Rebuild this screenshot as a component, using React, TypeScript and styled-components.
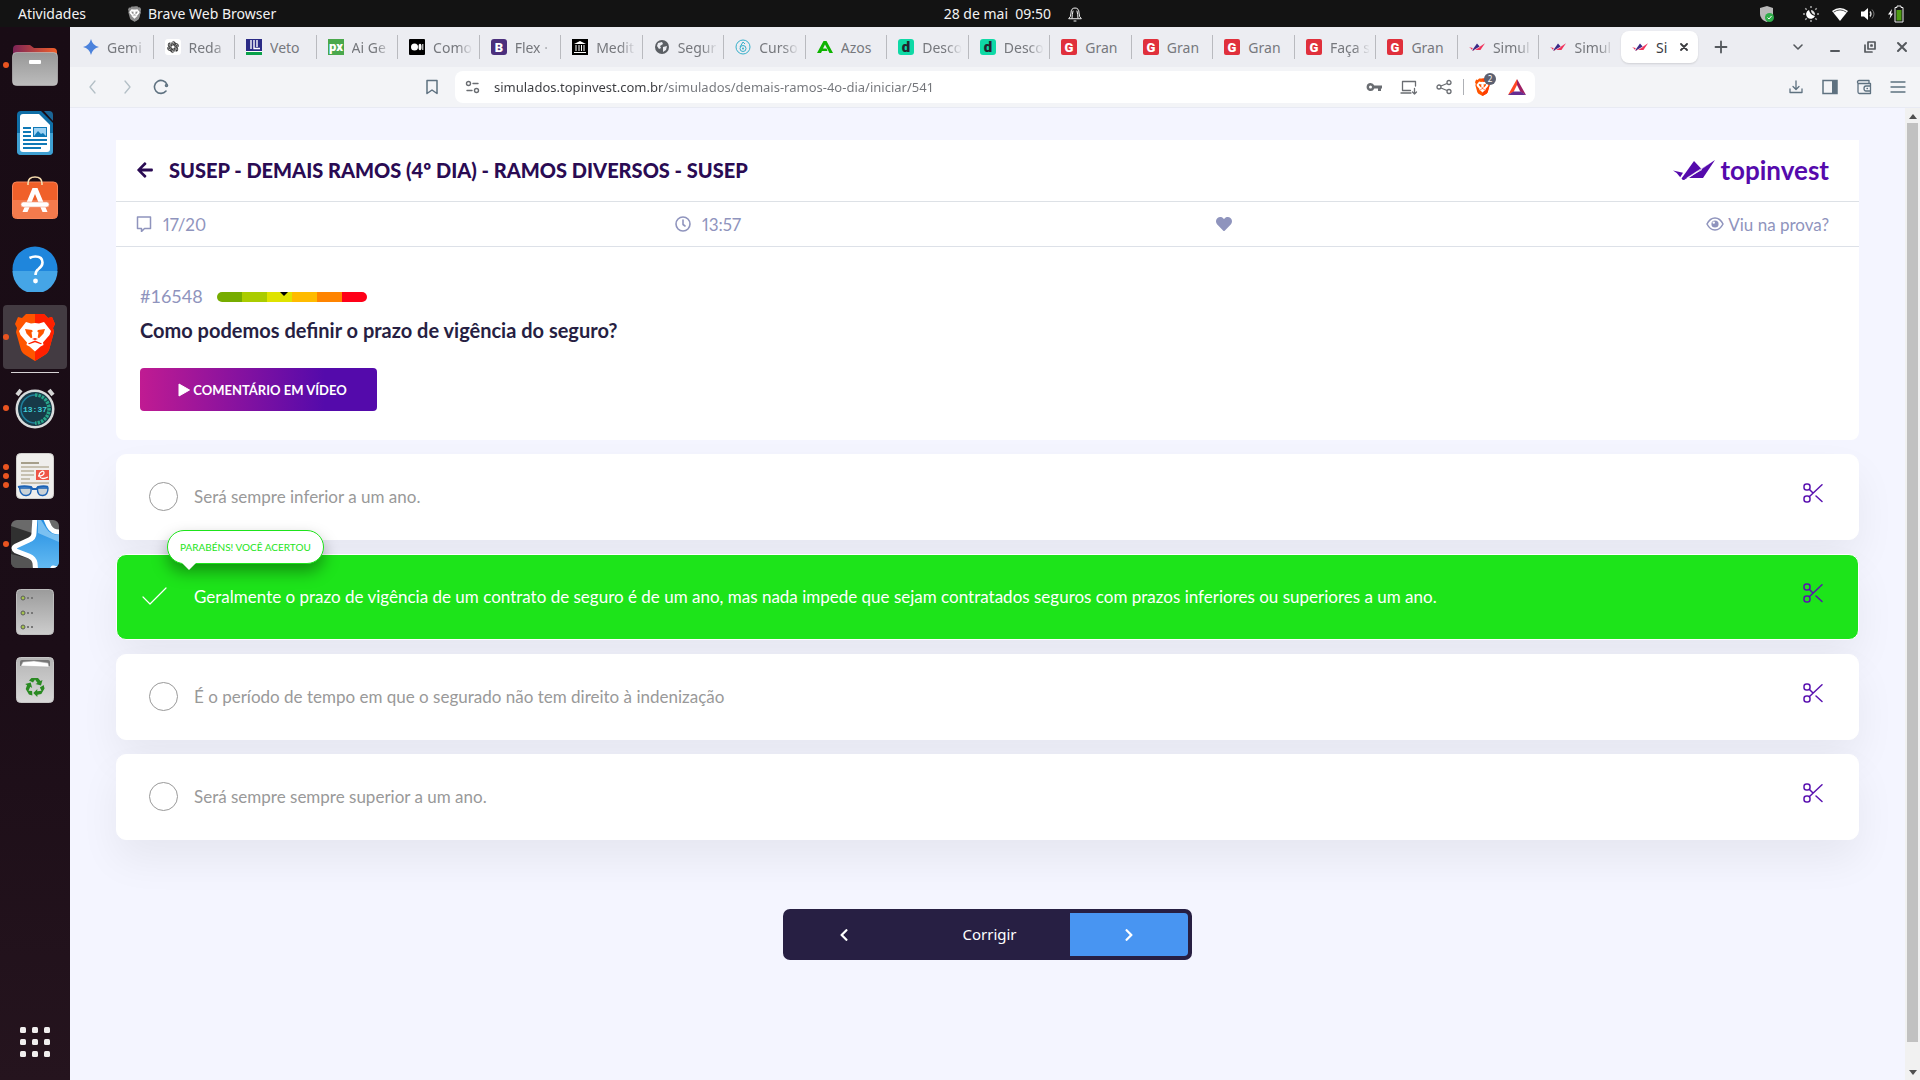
import React, { useState } from "react";
import styled, { createGlobalStyle, css } from "styled-components";
import { FaArrowLeft, FaHeart, FaChevronLeft, FaChevronRight } from "react-icons/fa";

const uiFont = `"Noto Sans", "Open Sans", sans-serif`;
const pageFont = `Lato, "Open Sans", sans-serif`;

const GlobalStyle = createGlobalStyle`
  *, *::before, *::after { box-sizing: border-box; }
  body { margin: 0; background: #f4f5ff; }
  button { border: 0; padding: 0; margin: 0; background: none; font: inherit; color: inherit; cursor: pointer; }
  svg { display: block; flex: none; }
`;

/* ---------- desktop ---------- */

const Desktop = styled.div`
  display: grid;
  grid-template: 27px minmax(0, 1fr) / 70px minmax(0, 1fr);
  height: 100vh;
  font-family: ${uiFont};
`;

const TopBar = styled.header`
  grid-column: 1 / -1;
  display: grid;
  grid-template-columns: 53fr auto 47fr;
  align-items: center;
  padding: 0 16px 0 18px;
  background: #131313;
  color: #f2f2f2;
  font-size: 14px;
  line-height: 26px;
`;

const BarGroup = styled.div<{ $gap: number; $end?: boolean }>`
  display: flex;
  align-items: center;
  gap: ${(p) => p.$gap}px;
  justify-content: ${(p) => (p.$end ? "flex-end" : "flex-start")};
`;

const BarButton = styled.button`
  display: flex;
  align-items: center;
  gap: 7px;
`;

const Dock = styled.nav`
  display: flex;
  flex-direction: column;
  align-items: center;
  gap: 4px;
  padding: 6px 0 6px;
  background: linear-gradient(#190c15, #1b0d17 60%, #25141e);
`;

const DockButton = styled.button<{ $active?: boolean }>`
  position: relative;
  display: grid;
  place-items: center;
  width: 64px;
  height: 64px;
  border-radius: 4px;
  background: ${(p) => (p.$active ? "#433b42" : "transparent")};
`;

const RunningDots = styled.span`
  position: absolute;
  left: 0;
  top: 0;
  bottom: 0;
  display: flex;
  flex-direction: column;
  justify-content: center;
  gap: 3px;
  i { width: 6px; height: 6px; border-radius: 50%; background: #e95420; }
`;

const DockRule = styled.hr`
  width: 48px;
  height: 1px;
  margin: -1px 0;
  border: 0;
  background: #d6d3d5;
`;

const DockSpacer = styled.div`
  flex: 1;
`;

/* ---------- browser ---------- */

const Browser = styled.div`
  display: flex;
  flex-direction: column;
  min-width: 0;
  min-height: 0;
`;

const TabStrip = styled.div`
  display: flex;
  flex: none;
  height: 40px;
  background: #ecedf2;
`;

const Tabs = styled.div`
  flex: 1;
  min-width: 0;
  display: grid;
  grid-template-columns: repeat(19, minmax(0, 1fr)) 77px;
  align-items: center;
  padding-left: 2px;
`;

const Tab = styled.button<{ $active?: boolean }>`
  display: flex;
  align-items: center;
  gap: 8px;
  min-width: 0;
  height: 24px;
  padding: 0 3px 0 11px;
  font-size: 14px;
  color: #76787d;
  border-right: 1px solid #b9babf;
  ${(p) =>
    p.$active &&
    css`
      height: 32px;
      padding-right: 10px;
      border: 0;
      border-radius: 8px;
      background: #fff;
      color: #3a3b3f;
      box-shadow: 0 1px 2px rgba(0, 0, 0, 0.12);
    `}
  &:nth-last-child(2) { border-color: transparent; }
`;

const TabTitle = styled.span<{ $fade?: boolean }>`
  flex: 1;
  min-width: 0;
  overflow: hidden;
  white-space: nowrap;
  text-align: left;
  mask-image: ${(p) => (p.$fade ? "linear-gradient(to right, #000 24px, transparent 40px)" : "none")};
`;

const WindowTools = styled.div`
  flex: none;
  display: flex;
  align-items: center;
  justify-content: space-between;
  width: 222px;
  padding: 0 10px 0 15px;
  color: #54585d;
`;

const WindowButtons = styled.div`
  display: flex;
  gap: 16px;
`;

const ToolBar = styled.div`
  flex: none;
  display: grid;
  grid-template-columns: 370px minmax(0, 1080px) 1fr;
  align-items: center;
  height: 41px;
  padding: 0 14px 1px 15px;
  background: #f3f4f7;
  border-bottom: 1px solid #e8eaf3;
  color: #5e7180;
`;

const NavTools = styled.div`
  display: flex;
  align-items: center;
  gap: 18px;
`;

const NavButton = styled.button<{ $idle?: boolean }>`
  color: ${(p) => (p.$idle ? "#b3bfc6" : "inherit")};
`;

const BookmarkButton = styled.button`
  margin: 0 15px 0 auto;
`;

const AddressBar = styled.div`
  display: flex;
  align-items: center;
  height: 32px;
  padding: 0 9px 0 10px;
  border-radius: 8px;
  background: #fff;
  color: #6a6d72;
`;

const AddressInput = styled.input`
  flex: 1;
  min-width: 0;
  height: 28px;
  margin: 0 13px;
  padding: 0;
  border: 0;
  outline: 0;
  font: 13px/28px ${uiFont};
  color: transparent;
  background: linear-gradient(to right, #3a3b3f 168px, #73757a 168px);
  background-clip: text;
  -webkit-background-clip: text;
`;

const AddressTools = styled.div`
  display: flex;
  align-items: center;
  gap: 18px;
`;

const Divider = styled.span`
  width: 1px;
  height: 16px;
  margin: 0 -7px;
  background: #aeb0b5;
`;

const ShieldButton = styled.button`
  position: relative;
`;

const ShieldCount = styled.span`
  position: absolute;
  top: -5px;
  right: -6px;
  width: 12px;
  height: 12px;
  border-radius: 50%;
  background: #5c6070;
  color: #fff;
  font-size: 8px;
  line-height: 12px;
  text-align: center;
`;

const EndTools = styled.div`
  display: flex;
  justify-content: flex-end;
  gap: 18px;
`;

const Viewport = styled.div`
  flex: 1;
  min-height: 0;
  display: grid;
  grid-template-columns: minmax(0, 1fr) 15px;
`;

const ScrollBar = styled.div`
  display: flex;
  flex-direction: column;
  align-items: center;
  justify-content: space-between;
  padding: 6px 0 5px;
  background: #f1f1f1;
`;

const ScrollThumb = styled.div`
  flex: 1;
  width: 11px;
  margin: 4px 0 28px;
  background: #c1c1c1;
`;

/* ---------- quiz page ---------- */

const Page = styled.main`
  padding: 32px 46px;
  overflow: hidden;
  background: #f4f5ff;
  font-family: ${pageFont};
`;

const Card = styled.section`
  background: #fff;
  border-radius: 0 0 8px 8px;
`;

const CardHeader = styled.div`
  display: flex;
  align-items: center;
  gap: 15px;
  height: 62px;
  padding: 0 30px 2px 20px;
  border-bottom: 1px solid #dde1e6;
  color: #2a0b53;
`;

const Title = styled.h1`
  margin: 0;
  font-size: 20px;
  font-weight: 900;
  line-height: 30px;
`;

const Brand = styled.a`
  display: flex;
  align-items: center;
  gap: 5px;
  margin-left: auto;
  color: #550aac;
  font-size: 26px;
  font-weight: 700;
  line-height: 30px;
  text-decoration: none;
`;

const Stats = styled.div`
  display: grid;
  grid-template-columns: 539fr 541fr 613fr;
  align-items: center;
  height: 45px;
  padding: 0 30px 0 20px;
  border-bottom: 1px solid #dde1e8;
  color: #8f94bd;
  font-size: 17px;
  font-variant-numeric: proportional-nums;
`;

const Stat = styled.div`
  display: flex;
  align-items: center;
  gap: 11px;
`;

const StatEnd = styled.div`
  display: flex;
  justify-content: space-between;
  align-items: center;
`;

const SeenButton = styled.button`
  display: flex;
  align-items: center;
  gap: 4px;
`;

const Question = styled.div`
  padding: 36px 24px 29px;
`;

const Meta = styled.div`
  display: flex;
  align-items: center;
  gap: 14px;
  color: #8f94bd;
  font-size: 18px;
  line-height: 26px;
`;

const Level = styled.div`
  position: relative;
  display: grid;
  grid-template-columns: repeat(6, 25px);
  height: 10px;
  margin-top: 2px;
  border-radius: 5px;
  overflow: hidden;
`;

const LevelStep = styled.span<{ $color: string }>`
  background: ${(p) => p.$color};
`;

const LevelMark = styled.span`
  position: absolute;
  left: 63px;
  top: 0;
  border: 4px solid transparent;
  border-top-color: #000;
`;

const Prompt = styled.h2`
  margin: 7px 0 24px;
  color: #271f43;
  font-size: 20px;
  font-weight: 700;
  line-height: 28px;
`;

const VideoButton = styled.button`
  display: flex;
  align-items: center;
  justify-content: center;
  gap: 3px;
  width: 237px;
  height: 43px;
  padding-left: 8px;
  border-radius: 4px;
  background: linear-gradient(to right, #c01b92, #540aab 78%);
  color: #fff;
  font-size: 13px;
  font-weight: 700;
`;

const Answers = styled.div`
  display: grid;
  gap: 14px;
  margin: 14px 0 0;
`;

const Answer = styled.div<{ $correct?: boolean }>`
  position: relative;
  display: flex;
  align-items: center;
  height: 86px;
  padding: 0 35px 2px 25px;
  border: 1px solid #fff;
  border-radius: 10px;
  background: ${(p) => (p.$correct ? "#1de41a" : "#fff")};
  color: ${(p) => (p.$correct ? "#fff" : "#999")};
  box-shadow: 0 20px 40px rgba(0, 0, 0, 0.06);
`;

const AnswerLabel = styled.label`
  flex: 1;
  display: flex;
  align-items: center;
  gap: 16px;
  font-size: 17px;
  line-height: 24px;
`;

const AnswerText = styled.span`
  padding-top: 2px;
`;

const RadioSlot = styled.span`
  display: flex;
  flex: none;
  align-items: center;
  width: 36px;
`;

const Radio = styled.input`
  appearance: none;
  flex: none;
  width: 29px;
  height: 29px;
  margin: 0 0 0 auto;
  border: 1px solid #999;
  border-radius: 50%;
  &:checked { width: 0; height: 0; border: 0; margin: 0; }
`;

const CutButton = styled.button`
  margin-bottom: 7px;
  color: #5a12b0;
`;

const Bubble = styled.div`
  position: absolute;
  left: 50px;
  top: -25px;
  padding: 0 12px;
  height: 34px;
  border: 1px solid #1de41a;
  border-radius: 17px;
  background: #fff;
  color: #1de41a;
  font-size: 10px;
  line-height: 32px;
  white-space: nowrap;
  box-shadow: 0 8px 16px rgba(0, 0, 0, 0.35);
  &::after {
    content: "";
    position: absolute;
    left: 13px;
    top: 31px;
    border: 8px solid transparent;
    border-top-color: #fff;
    border-bottom: 0;
  }
`;

const Pager = styled.div`
  display: grid;
  grid-template-columns: 114px 169px 118px;
  width: fit-content;
  height: 51px;
  margin: 69px auto 0;
  padding: 4px;
  border-radius: 7px;
  background: #271f43;
  color: #fff;
  font-family: ${uiFont};
  font-size: 15px;
`;

const PagerButton = styled.button<{ $next?: boolean; $wide?: boolean }>`
  display: grid;
  place-items: center;
  padding: ${(p) => (p.$wide ? "0 0 2px 8px" : "0")};
  border-radius: 0 4px 4px 0;
  background: ${(p) => (p.$next ? "#4895f2" : "transparent")};
`;

/* ---------- drawings ---------- */

const Line = ({ d, w = 16, h = 16, s = 1.5, box }: { d: string; w?: number; h?: number; s?: number; box?: string }) => (
  <svg width={w} height={h} viewBox={box || `0 0 ${w} ${h}`} fill="none" stroke="currentColor" strokeWidth={s} strokeLinecap="round" strokeLinejoin="round">
    <path d={d} />
  </svg>
);

const Lion = ({ w, h, a, b, face = "#fff" }: { w: number; h: number; a: string; b: string; face?: string }) => (
  <svg width={w} height={h} viewBox="0 0 40 48">
    <path d="M11 1h18l4 4 4-1 3 7-2 4 1 4-5 18c-1 3-4 5-6 6l-8 5-8-5c-2-1-5-3-6-6L1 19l1-4-2-4 3-7 4 1z" fill={a} />
    <path d="M20 1h9l4 4 4-1 3 7-2 4 1 4-5 18c-1 3-4 5-6 6l-8 5z" fill={b} />
    <path d="M11 9l5 1.500 4-.5 4 .5 5-1.500 7 9-1.500 4-6.500 7.500.5 2.500-3 1.500-5.500 5-5.500-5-3-1.500.5-2.500L5.500 22 4 18z" fill={face} />
    <path d="M10 16l7 1 .8 1.200-1.300 1.300.8 5-1.300.8-4.500-4.800zM30 16l-7 1-.8 1.200 1.300 1.300-.8 5 1.300.8 4.500-4.800z" fill={a} />
    <path d="M13 30.500l7-3 7 3-1 .8-6-2-6 2zM17 26l3-1 3 1-3 1z" fill={b} />
  </svg>
);

const FilesIcon = () => (
  <svg width="46" height="42" viewBox="0 0 46 42">
    <defs>
      <linearGradient id="fa"><stop stopColor="#7d2457" /><stop offset="1" stopColor="#f0602a" /></linearGradient>
      <linearGradient id="fb" x2="0" y2="1"><stop stopColor="#979797" /><stop offset="1" stopColor="#bcbcbc" /></linearGradient>
    </defs>
    <path d="M1 5q0-4 4-4h13l4 3h19q4 0 4 4v20H1z" fill="url(#fa)" />
    <rect x=".5" y="8.500" width="45" height="33" rx="4" fill="url(#fb)" stroke="#c9c9c9" strokeWidth=".6" />
    <rect x="17" y="16" width="12" height="4" rx="1" fill="#fff" />
  </svg>
);

const WriterIcon = () => (
  <svg width="38" height="46" viewBox="0 0 38 46">
    <path d="M5 1h20l12 12v28q0 4-4 4H5q-4 0-4-4V5q0-4 4-4z" fill="#0f6ea6" />
    <path d="M1 23h36v18q0 4-4 4H5q-4 0-4-4z" fill="#3fa0d2" />
    <path d="M28 1h5q4 0 4 4v6z" fill="#1b6595" />
    <path d="M7 4h16l11 11v24q0 3-3 3H7q-3 0-3-3V7q0-3 3-3z" fill="#fff" />
    <path d="M7 18h8M7 22h8M7 26h8M7 30h24M7 34h24M7 38h18" stroke="#1079b6" strokeWidth="2" />
    <rect x="17.500" y="17.500" width="13" height="9" fill="#9dd2f3" stroke="#1079b6" />
    <path d="M18 26l4-5 3 3 2-1 3 3z" fill="#1079b6" />
  </svg>
);

const StoreIcon = () => (
  <svg width="46" height="50" viewBox="0 1 46 50">
    <rect x=".5" y="7" width="45" height="36.500" rx="4" fill="#f0602a" stroke="#f5855a" />
    <path d="M1 25h44v14q0 4-4 4H5q-4 0-4-4z" fill="#f37b4d" />
    <path d="M16 10V8.500q0-6.500 7-6.500t7 6.500V10" fill="none" stroke="#f6dcae" strokeWidth="1.600" />
    <path d="M20.500 13h5l10 24h-5L23 19l-7.500 18h-5z" fill="#fff" />
    <rect x="9" y="27" width="28" height="5" rx="2.500" fill="#fff" stroke="#f3a184" strokeWidth=".6" />
  </svg>
);

const HelpIcon = () => (
  <svg width="46" height="46" viewBox="0 0 46 46">
    <circle cx="23" cy="23" r="22.500" fill="#1f86dc" />
    <path d="M.5 25a22.500 22.500 0 0 0 45 0z" fill="#45a5e6" />
    <path d="M17.500 12q3-1.500 6-1.500 7 0 7 6 0 3.500-4 6.500-3 2-3 6" fill="none" stroke="#fff" strokeWidth="2.600" />
    <circle cx="23.500" cy="35" r="2.400" fill="#fff" />
  </svg>
);

const ClockIcon = () => (
  <svg width="42" height="42" viewBox="0 0 42 42">
    <path d="M3 8l4-5M39 8l-4-5" stroke="#d6d6d6" strokeWidth="4" />
    <circle cx="21" cy="22" r="19.500" fill="#d9dcdc" />
    <circle cx="21" cy="22" r="17" fill="#173a48" />
    <path d="M21 8a14 14 0 0 1 0 28" fill="none" stroke="#28a58a" strokeWidth="3.500" strokeDasharray="2.500 1" />
    <path d="M21 36a14 14 0 0 1 0-28" fill="none" stroke="#1f7f9b" strokeWidth="1.500" />
    <text x="21" y="25" textAnchor="middle" fontFamily="Liberation Mono, monospace" fontWeight="700" fontSize="8" fill="#41cfd8">13:37</text>
  </svg>
);

const ReaderIcon = () => (
  <svg width="38" height="46" viewBox="0 0 38 46">
    <rect x=".5" y=".5" width="37" height="45" rx="4" fill="#efeeec" stroke="#d0cfcd" />
    <path d="M5 10h18" stroke="#a69f8b" strokeWidth="2" />
    <path d="M5 14h28M5 18h13M5 22h13M5 26h9M5 30h28" stroke="#c6c0b0" strokeWidth="2" />
    <rect x="20" y="17" width="13" height="10" fill="#ee5447" />
    <path d="M22 23q6 0 6-3t-3-1-1 5 8 0" fill="none" stroke="#fff" strokeWidth="1.300" />
    <path d="M2 34q6-1.500 13 0l1.500 2h4L22 34q6-1.500 10 0" fill="none" stroke="#1d63b5" strokeWidth="2" />
    <path d="M3.500 35h11.500q1 7-4.500 7.500-6 .5-7-7.500zM21.500 35H32q0 7-5 7.500-6 .5-5.500-7.500z" fill="#cbd2d6" stroke="#1d63b5" strokeWidth="1.400" />
  </svg>
);

const StarIcon = () => (
  <svg width="48" height="48" viewBox="0 0 48 48">
    <defs>
      <clipPath id="ak"><rect width="48" height="48" rx="6" /></clipPath>
      <linearGradient id="ab" x2="0" y2="1"><stop stopColor="#1f8be0" /><stop offset="1" stopColor="#6cc0f5" /></linearGradient>
    </defs>
    <g clipPath="url(#ak)">
      <rect width="48" height="48" fill="#6a6a6a" />
      <path d="M0 6l24 8v34H0z" fill="#303030" />
      <path d="M0 34l24 6v8H0z" fill="#555" />
      <path d="M24-3l-1 16q0 5-5 7L5 26q-4 2 0 5l13 5q5 2 6 7l1 12h15l2-7 12 3V12h-6q-7 0-10-6L34-3z" fill="url(#ab)" stroke="#fff" strokeWidth="5" strokeLinejoin="round" />
      <path d="M27 13l21 9v-7q-9 0-13-7l-5-8h-3z" fill="#8ccaf5" opacity=".8" />
    </g>
  </svg>
);

const ServerIcon = () => (
  <svg width="38" height="46" viewBox="0 0 38 46">
    <defs><linearGradient id="sv" x2="0" y2="1"><stop stopColor="#9b9b9b" /><stop offset="1" stopColor="#cdcdcd" /></linearGradient></defs>
    <rect x=".5" y=".5" width="37" height="45" rx="4" fill="url(#sv)" stroke="#bdbdbd" />
    {[9, 24, 38].map((y) => (
      <g key={y}>
        <circle cx="7" cy={y} r="2" fill="#a5c54c" stroke="#5b5b5b" />
        <path d={`M11 ${y}h2M15 ${y}h2`} stroke="#777" strokeWidth="2" />
      </g>
    ))}
  </svg>
);

const TrashIcon = () => (
  <svg width="38" height="46" viewBox="0 0 38 46">
    <defs><linearGradient id="tr" x2="0" y2="1"><stop stopColor="#b5b5b5" /><stop offset="1" stopColor="#d9d9d9" /></linearGradient></defs>
    <rect x=".5" y=".5" width="37" height="45" rx="4" fill="url(#tr)" stroke="#c6c6c6" />
    <path d="M4 9V5q0-2 2-2h26q2 0 2 2v4z" fill="#777" />
    <path d="M5 9l2-4 11-1 14 2 1 4z" fill="#fff" stroke="#aaa" strokeWidth=".5" />
    <g fill="#2a8a22">
      {[0, 120, 240].map((r) => (
        <path key={r} transform={`rotate(${r} 19 30)`} d="M15.500 21h6.500l2.500 3 2-1-1.500 5.500-5.500-1.500 2-1-2.500-3.500-2 3-4-2z" />
      ))}
    </g>
  </svg>
);

const GridIcon = () => (
  <svg width="30" height="30" viewBox="0 0 30 30" fill="#f0eeee">
    {[0, 12, 24].map((y) => [0, 12, 24].map((x) => <rect key={`${x}-${y}`} x={x} y={y} width="6" height="6" rx="1.500" />))}
  </svg>
);

const BirdMark = ({ w, h, a, b }: { w: number; h: number; a: string; b: string }) => (
  <svg width={w} height={h} viewBox="0 0 42 20">
    <path d="M0 10.500l10 2.200-2.800 4.500Q5 13 0 10.500z" fill={b} />
    <path d="M8.500 18.500L21 1l7 7.500L10 20z" fill={a} />
    <path d="M16 18L42 0 30 18z" fill={b} />
    <path d="M42 0L27 10 9 20h2z" fill={b} />
    <path d="M14 18L29 9.500" stroke="#fff" strokeWidth=".8" />
  </svg>
);

const Favicon = ({ kind }: { kind: string }) => {
  const letter = (bg: string, fg: string, t: string, size = 12, r = 2, y = 12.5) => (
    <>
      <rect width="16" height="16" rx={r} fill={bg} />
      <text x="8" y={y} textAnchor="middle" fontFamily="Roboto, sans-serif" fontWeight="900" fontSize={size} fill={fg}>{t}</text>
    </>
  );
  if (kind === "bird") return <BirdMark w={16} h={8} a="#3b2a86" b="#f0325a" />;
  const art: Record<string, React.ReactNode> = {
    gemini: <path d="M8 0q1.500 6.500 8 8-6.500 1.500-8 8-1.500-6.500-8-8 6.500-1.500 8-8z" fill="#4b82dc" />,
    gpt: (
      <>
        <rect width="16" height="16" rx="3" fill="#fff" />
        <g fill="none" stroke="#333" strokeWidth=".9">
          {[0, 60, 120, 180, 240, 300].map((r) => <path key={r} d="M6 9.200V4.500Q8 1 10.500 3.500M6 5.500L10 3.200" transform={`rotate(${r} 8 8)`} />)}
        </g>
      </>
    ),
    veto: (<><rect width="16" height="12" fill="#2b2b86" /><path d="M5 1v9M8 1v8.500h6M11 1v7" stroke="#fff" strokeWidth="1.400" fill="none" /><path d="M0 12.500h16" stroke="#fff" /><path d="M0 13h16v3H0z" fill="#0aa14a" /></>),
    px: letter("#4aa84c", "#fff", "px", 13, 0, 11.5),
    medium: (<><rect width="16" height="16" rx="1" fill="#000" /><circle cx="5.500" cy="8" r="3.500" fill="#fff" /><ellipse cx="11" cy="8" rx="1.500" ry="3.200" fill="#fff" /><path d="M13.800 5v6" stroke="#fff" /></>),
    boot: letter("#4b2f7d", "#fff", "B", 13, 3),
    bank: (<><rect width="16" height="16" fill="#000" /><path d="M2 5l6-3 6 3zM2 13h12v1H2z" fill="#fff" /><path d="M4 6v6M7 6v6M9.500 6v6M12 6v6" stroke="#fff" /></>),
    globe: (<><circle cx="8" cy="8" r="7" fill="#5b5f64" /><path d="M4 4l4-1 1 2-3 2 1 2-2 1-2-3zM9 8l4-1-1 4-3 2z" fill="#ecedf2" /></>),
    curso: (<><circle cx="8" cy="8" r="7" fill="none" stroke="#36b0cb" /><path d="M8 3l-3 5M8 3l2 2" stroke="#36b0cb" /><circle cx="8" cy="9.500" r="3" fill="none" stroke="#36b0cb" /><circle cx="8" cy="9.500" r="1" fill="#36b0cb" /></>),
    azos: <path fillRule="evenodd" d="M6.500 2h3L16 14h-3.500L8 5.500 6 9.500h3.500l1 2.500H5L4 14H0z" fill="#0db400" />,
    d: letter("#0fd9a6", "#23252e", "d", 15, 3, 13),
    g: letter("#e0303c", "#fff", "G", 13),
  };
  return <svg width="16" height="16" viewBox="0 0 16 16">{art[kind]}</svg>;
};

const Scissors = () => (
  <svg width="20" height="20" viewBox="0 0 20 20" fill="none" stroke="currentColor" strokeWidth="1.500" strokeLinecap="round">
    <rect x="1" y="1" width="6" height="6" rx="2.500" />
    <rect x="1" y="13" width="6" height="6" rx="2.500" />
    <path d="M6.500 6.500L10 10M6.500 13.500L19 1.800M13 13l6 5.500" />
  </svg>
);

/* ---------- content ---------- */

const tabs: [string, string][] = [
  ["gemini", "Gemi"], ["gpt", "Reda"], ["veto", "Veto"], ["px", "Ai Ge"], ["medium", "Como"],
  ["boot", "Flex ·"], ["bank", "Medit"], ["globe", "Segur"], ["curso", "Curso"], ["azos", "Azos"],
  ["d", "Desco"], ["d", "Desco"], ["g", "Gran"], ["g", "Gran"], ["g", "Gran"], ["g", "Faça s"],
  ["g", "Gran"], ["bird", "Simul"], ["bird", "Simul"],
];

const whole = ["Gran", "Azos", "Veto"];

const levels = ["#76ac00", "#aacc00", "#dfe300", "#ffbb00", "#ff8400", "#ff0018"];

const answers = [
  "Será sempre inferior a um ano.",
  "Geralmente o prazo de vigência de um contrato de seguro é de um ano, mas nada impede que sejam contratados seguros com prazos inferiores ou superiores a um ano.",
  "É o período de tempo em que o segurado não tem direito à indenização",
  "Será sempre sempre superior a um ano.",
];

const dockTop = [
  { name: "Arquivos", icon: <FilesIcon />, dots: 1 },
  { name: "Writer", icon: <WriterIcon />, dots: 0 },
  { name: "Programas", icon: <StoreIcon />, dots: 0 },
  { name: "Ajuda", icon: <HelpIcon />, dots: 0 },
  { name: "Brave", icon: <Lion w={40} h={48} a="#ff5500" b="#ff2000" />, dots: 1 },
];

const dockBottom = [
  { name: "Relógio", icon: <ClockIcon />, dots: 1 },
  { name: "Documentos", icon: <ReaderIcon />, dots: 3 },
  { name: "Anki", icon: <StarIcon />, dots: 1 },
  { name: "Discos", icon: <ServerIcon />, dots: 0 },
  { name: "Lixeira", icon: <TrashIcon />, dots: 0 },
];

const DockItem = ({ item, active }: { item: (typeof dockTop)[number]; active?: boolean }) => (
  <DockButton aria-label={item.name} $active={active}>
    <RunningDots>{Array.from({ length: item.dots }, (_, i) => <i key={i} />)}</RunningDots>
    {item.icon}
  </DockButton>
);

export default function App() {
  const [url, setUrl] = useState("simulados.topinvest.com.br/simulados/demais-ramos-4o-dia/iniciar/541");
  const [picked, setPicked] = useState(1);

  return (
    <Desktop>
      <GlobalStyle />
      <TopBar>
        <BarGroup $gap={42}>
          <BarButton>Atividades</BarButton>
          <BarButton><Lion w={13} h={16} a="#8d8d8d" b="#8d8d8d" /> Brave Web Browser</BarButton>
        </BarGroup>
        <BarGroup $gap={16}>
          <BarButton>28 de mai&nbsp; 09:50</BarButton>
          <Line d="M2 12.500Q4 11 4 7q0-5 4-5t4 5q0 4 2 5.500zM7 15h2M6 5q-1 4-1 7M10 5q1 4 1 7" s={1} />
        </BarGroup>
        <BarGroup $gap={13} $end>
          <svg width="30" height="18" viewBox="0 0 30 18">
            <path d="M0 3l7-2 6 2v6q0 5-6.500 8Q0 14 0 9z" fill="#b9b9b9" />
            <circle cx="9.500" cy="12.500" r="4.500" fill="#2fae4a" />
            <path d="M7.500 12.500l1.500 1.500 2.500-3" stroke="#fff" fill="none" />
          </svg>
          <svg width="16" height="16" viewBox="0 0 16 16">
            <path d="M6 4a4.600 4.600 0 1 0 6 6Q7 9 6 4z" fill="#fff" />
            <path d="M8 4a4.500 4.500 0 0 1 4 5Q8 8 8 4z" fill="#ddd" />
            <path d="M8 0v2M8 14v2M0 8h2M14 8h2M2.300 2.300l1.400 1.400M12.300 12.300l1.400 1.400M2.300 13.700l1.400-1.400M12.300 3.700l1.400-1.400" stroke="#aaa" strokeWidth="1.500" />
          </svg>
          <svg width="16" height="14" viewBox="0 0 16 14"><path d="M0 4q8-6 16 0L8 14z" fill="#fff" /><path d="M1.500 5.200q6.500-4.500 13 0" stroke="#555" fill="none" /></svg>
          <svg width="14" height="14" viewBox="0 0 14 14"><path d="M0 4.500h3L7 1v12L3 9.500H0z" fill="#fff" /><path d="M9 4.500q2 2.500 0 5" stroke="#ddd" fill="none" strokeWidth="1.300" /><path d="M11 2.500q4 4.500 0 9" stroke="#777" fill="none" /></svg>
          <svg width="16" height="18" viewBox="0 0 16 18"><path d="M4 4L0 9.500h2.500L1.500 14 5 8.500H3z" fill="#fff" /><path d="M9 1h4v1.500h2V17H7V2.500h2z" fill="none" stroke="#eee" /><path d="M8.500 5h5v10.500h-5z" fill="#4f9f12" /></svg>
        </BarGroup>
      </TopBar>

      <Dock>
        {dockTop.map((item, i) => <DockItem key={item.name} item={item} active={i === 4} />)}
        <DockRule />
        {dockBottom.map((item) => <DockItem key={item.name} item={item} />)}
        <DockSpacer />
        <DockButton aria-label="Mostrar aplicativos"><GridIcon /></DockButton>
      </Dock>

      <Browser>
        <TabStrip>
          <Tabs>
            {tabs.map(([kind, title], i) => (
              <Tab key={i}><Favicon kind={kind} /><TabTitle $fade={!whole.includes(title)}>{title}</TabTitle></Tab>
            ))}
            <Tab $active>
              <Favicon kind="bird" /><TabTitle>Si</TabTitle>
              <Line d="M1 1l6 6M7 1L1 7" w={8} h={8} s={1.8} />
            </Tab>
          </Tabs>
          <WindowTools>
            <button aria-label="Nova aba"><Line d="M8 2.500v11M2.500 8h11" s={1.8} /></button>
            <WindowButtons>
              <button aria-label="Buscar abas"><Line d="M4 6l4 4 4-4" s={1.6} /></button>
              <button aria-label="Minimizar"><Line d="M4 12h8" w={24} box="-5 0 24 16" s={2} /></button>
              <button aria-label="Restaurar"><Line d="M6 3h7v7H6zM3 6v7h7M9 6h1v1H9z" s={1.7} /></button>
              <button aria-label="Fechar"><Line d="M4 4l8 8M12 4l-8 8" s={2} /></button>
            </WindowButtons>
          </WindowTools>
        </TabStrip>

        <ToolBar>
          <NavTools>
            <NavButton $idle aria-label="Voltar"><Line d="M10 2L5 8l5 6" s={1.3} /></NavButton>
            <NavButton $idle aria-label="Avançar"><Line d="M6 2l5 6-5 6" s={1.3} /></NavButton>
            <NavButton aria-label="Recarregar"><Line d="M13 12A6.500 6.500 0 1 1 14 5.500M14.500 6.500a1 1 0 1 0-2 0a1 1 0 1 0 2 0" s={1.6} /></NavButton>
            <BookmarkButton aria-label="Favoritos"><Line d="M3 1.500h10v13L8 11l-5 3.500z" s={1.5} /></BookmarkButton>
          </NavTools>
          <AddressBar>
            <Line d="M1.500 4.500a2 2 0 1 0 4 0a2 2 0 1 0-4 0M8 4.500h5M9.500 11.500a2 2 0 1 0 4 0a2 2 0 1 0-4 0M2 11.500h5" s={1.4} />
            <AddressInput aria-label="Endereço" value={url} spellCheck={false} onChange={(e) => setUrl(e.target.value)} />
            <AddressTools>
              <button aria-label="Senhas"><svg width="16" height="16" viewBox="0 0 16 16" fill="currentColor"><path fillRule="evenodd" d="M4.500 4a4 4 0 0 1 3.800 2.500H16v3h-1V12h-3V9.500H8.300A4 4 0 1 1 4.500 4zm0 2.500a1.500 1.500 0 1 0 0 3 1.500 1.500 0 0 0 0-3z" /></svg></button>
              <button aria-label="Instalar"><Line d="M15.500 7V2.500H2.500v9h8M1 14h10M14.500 9.500V15M12.500 13l2 2 2-2" w={18} s={1.3} /></button>
              <button aria-label="Compartilhar"><Line d="M1 8a2 2 0 1 0 4 0a2 2 0 1 0-4 0M11 3.500a2 2 0 1 0 4 0a2 2 0 1 0-4 0M11 12.500a2 2 0 1 0 4 0a2 2 0 1 0-4 0M5 7l6-2.500M5 9l6 2.500" s={1.3} /></button>
              <Divider />
              <ShieldButton aria-label="Brave Shields"><Lion w={15} h={18} a="#ff5500" b="#ff3d00" /><ShieldCount>2</ShieldCount></ShieldButton>
              <button aria-label="Rewards">
                <svg width="18" height="16" viewBox="0 0 18 16"><path d="M9 0L0 16l5.500-3L9 6z" fill="#ff4724" /><path d="M9 0l9 16-5.500-3L9 6z" fill="#9e1f63" /><path d="M0 16h18l-5.500-3.500h-7z" fill="#662d91" /></svg>
              </button>
            </AddressTools>
          </AddressBar>
          <EndTools>
            <button aria-label="Downloads"><Line d="M8 2v8M5 7.500L8 10.500l3-3M2 10v3.500h12V10" s={1.3} /></button>
            <button aria-label="Painel lateral"><svg width="16" height="16" viewBox="0 0 16 16"><path d="M1 1.500h14v13H1z" fill="none" stroke="currentColor" strokeWidth="1.500" /><path d="M10 2h5v12h-5z" fill="currentColor" /></svg></button>
            <button aria-label="Carteira"><Line d="M2 4.500V13q0 1.500 1.500 1.500h11v-10H3Q1.500 4.500 1.500 3T3 1.500h10v3M14.500 7H10q-2 0-2 2.500T10 12h4.500M11 9.500h.5" s={1.3} /></button>
            <button aria-label="Menu"><Line d="M1 3h14M1 8h14M1 13h14" s={1.3} /></button>
          </EndTools>
        </ToolBar>

        <Viewport>
          <Page>
            <Card>
              <CardHeader>
                <button aria-label="Voltar ao início"><FaArrowLeft size={18} /></button>
                <Title>SUSEP - DEMAIS RAMOS (4º DIA) - RAMOS DIVERSOS - SUSEP</Title>
                <Brand href="#"><BirdMark w={42} h={20} a="#550aac" b="#550aac" />topinvest</Brand>
              </CardHeader>
              <Stats>
                <Stat><Line d="M1.500 1h13v11.500H8.500L5.500 15.500v-3h-4z" s={1.5} />17/20</Stat>
                <Stat><Line d="M1 8a7 7 0 1 0 14 0a7 7 0 1 0-14 0M8 4v4.500l2 1.500" s={1.6} />13:57</Stat>
                <StatEnd>
                  <button aria-label="Favoritar"><FaHeart size={16} /></button>
                  <SeenButton>
                    <svg width="18" height="14" viewBox="0 0 18 14"><path d="M1 7q3-6 8-6t8 6q-3 6-8 6T1 7z" fill="none" stroke="currentColor" strokeWidth="1.500" /><circle cx="9" cy="7" r="3.600" fill="currentColor" /><circle cx="7.800" cy="5.600" r="1.200" fill="#fff" /></svg>
                    Viu na prova?
                  </SeenButton>
                </StatEnd>
              </Stats>
              <Question>
                <Meta>
                  #16548
                  <Level>{levels.map((c) => <LevelStep key={c} $color={c} />)}<LevelMark /></Level>
                </Meta>
                <Prompt>Como podemos definir o prazo de vigência do seguro?</Prompt>
                <VideoButton>
                  <svg width="12" height="14" viewBox="0 0 12 14"><path d="M1 1v12l10.500-6z" fill="#fff" stroke="#fff" strokeLinejoin="round" /></svg>
                  COMENTÁRIO EM VÍDEO
                </VideoButton>
              </Question>
            </Card>

            <Answers role="radiogroup" aria-label="Respostas">
              {answers.map((text, i) => (
                <Answer key={i} $correct={i === picked}>
                  <AnswerLabel>
                    <RadioSlot>
                      <Radio type="radio" name="resposta" checked={i === picked} onChange={() => setPicked(i)} />
                      {i === picked && <Line d="M1 11l7 7L24 2" w={25} h={20} s={1.2} />}
                    </RadioSlot>
                    <AnswerText>{text}</AnswerText>
                  </AnswerLabel>
                  <CutButton aria-label="Eliminar alternativa"><Scissors /></CutButton>
                  {i === picked && <Bubble>PARABÉNS! VOCÊ ACERTOU</Bubble>}
                </Answer>
              ))}
            </Answers>

            <Pager>
              <PagerButton aria-label="Anterior"><FaChevronLeft size={14} /></PagerButton>
              <PagerButton $wide>Corrigir</PagerButton>
              <PagerButton $next aria-label="Próxima"><FaChevronRight size={14} /></PagerButton>
            </Pager>
          </Page>
          <ScrollBar aria-hidden="true">
            <svg width="8" height="5" viewBox="0 0 8 5"><path d="M0 5l4-5 4 5z" fill="#505050" /></svg>
            <ScrollThumb />
            <svg width="8" height="5" viewBox="0 0 8 5"><path d="M0 0l4 5 4-5z" fill="#505050" /></svg>
          </ScrollBar>
        </Viewport>
      </Browser>
    </Desktop>
  );
}
